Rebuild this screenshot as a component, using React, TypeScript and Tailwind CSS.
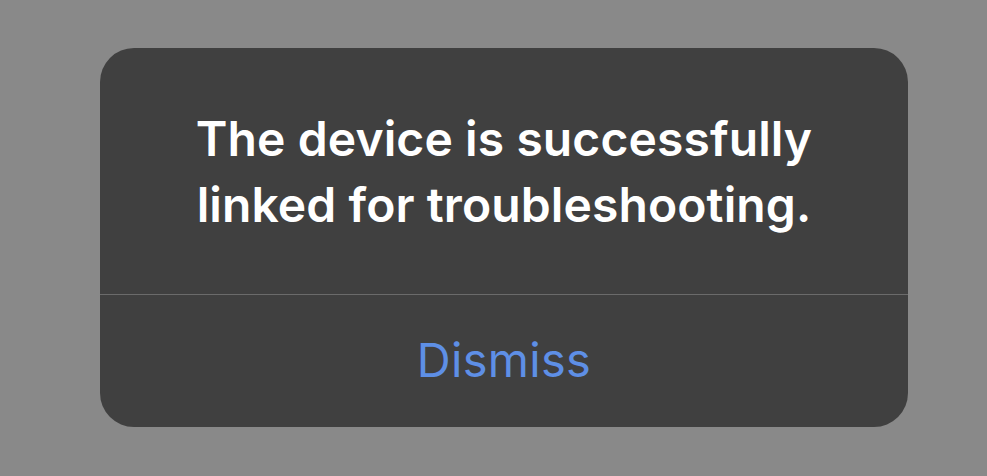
export default function App() {
  return (
    <div className="flex h-[476px] w-[987px] items-start bg-[#898989] pl-[100px] pt-[48px] font-['Inter',sans-serif]">
      <div className="flex h-[379px] w-[808px] flex-col overflow-hidden rounded-[34px] bg-[#404040]">
        <div className="flex h-[246px] items-center justify-center px-10 pt-[1px] text-center">
          <p className="text-[48px] font-semibold leading-[66px] tracking-[0.1px] text-white">
            The device is successfully
            <br />
            linked for troubleshooting.
          </p>
        </div>
        <div className="h-px bg-[#6b6b6b]" />
        <button className="flex flex-1 items-center justify-center pb-[2px] text-[47px] font-normal leading-normal tracking-[0.3px] text-[#5e8fe6]">
          Dismiss
        </button>
      </div>
    </div>
  )
}
